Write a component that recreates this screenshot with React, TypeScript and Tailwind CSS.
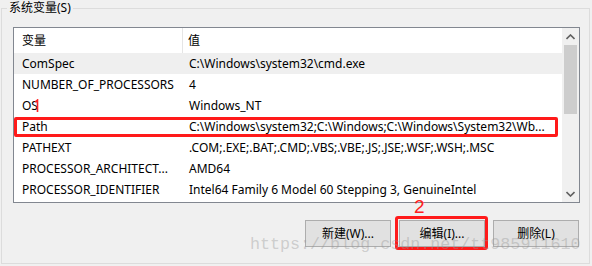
const rows: [string, string][] = [
  ['ComSpec', 'C:\\Windows\\system32\\cmd.exe'],
  ['NUMBER_OF_PROCESSORS', '4'],
  ['OS', 'Windows_NT'],
  ['Path', 'C:\\Windows\\system32;C:\\Windows;C:\\Windows\\System32\\Wb...'],
  ['PATHEXT', '.COM;.EXE;.BAT;.CMD;.VBS;.VBE;.JS;.JSE;.WSF;.WSH;.MSC'],
  ['PROCESSOR_ARCHITECT...', 'AMD64'],
  ['PROCESSOR_IDENTIFIER', 'Intel64 Family 6 Model 60 Stepping 3, GenuineIntel'],
];

const font = { fontFamily: '"Noto Sans", "Noto Sans CJK SC", sans-serif' };

// small filled chevron used by the scrollbar arrows
const Chevron = ({ down = false }: { down?: boolean }) => (
  <svg width="9" height="6" viewBox="0 0 9 6" className={down ? 'rotate-180' : ''}>
    <path d="M0.5 5 L4.5 1 L8.5 5" fill="none" stroke="#606060" strokeWidth="1.6" />
  </svg>
);

export default function App() {
  return (
    <div
      className="relative w-[592px] h-[266px] overflow-hidden bg-[#f0f0f0] pt-[8px] pl-[1px] text-[12px] text-black"
      style={font}
    >
      {/* group box */}
      <div className="relative w-[589px] h-[256px] border border-[#dcdcdc] pl-[11px] pt-[18px]">
        <span className="absolute left-[5px] -top-[9px] px-[2px] bg-[#f0f0f0] leading-[16px]">
          系统变量(S)
        </span>

        {/* list view */}
        <div className="flex w-[567px] h-[176px] border border-[#828790] bg-white">
          <div className="flex-1 flex flex-col">
            <div className="flex h-[25px] items-center">
              <div className="w-[169px] h-full pl-[8px] flex items-center border-r border-[#e5e5e5]">变量</div>
              <div className="pl-[5px]">值</div>
            </div>
            {rows.map(([name, value], i) => (
              <div
                key={name}
                className={`relative flex h-[21px] items-center whitespace-nowrap ${i === 0 ? 'bg-[#efefef]' : ''}`}
              >
                <div className="w-[170px] pl-[8px]">{name}</div>
                <div className="pl-[5px]">{value}</div>
                {name === 'Path' && (
                  <div className="absolute left-0 right-[4px] top-[1px] bottom-[0px] border-[3px] border-[#ff1a1a] rounded-[2px]" />
                )}
                {name === 'OS' && (
                  <svg className="absolute left-[20px] top-[4px]" width="6" height="14" viewBox="0 0 6 14">
                    <path d="M1 3 L3.5 1 L3.5 13" fill="none" stroke="#ff2020" strokeWidth="1.6" />
                  </svg>
                )}
              </div>
            ))}
          </div>

          {/* scrollbar */}
          <div className="w-[17px] flex flex-col items-center bg-[#f0f0f0]">
            <div className="h-[17px] flex items-center justify-center">
              <Chevron />
            </div>
            <div className="w-[13px] h-[69px] bg-[#cdcdcd]" />
            <div className="flex-1" />
            <div className="h-[17px] flex items-center justify-center">
              <Chevron down />
            </div>
          </div>
        </div>

        {/* buttons */}
        <div className="flex justify-end gap-[8px] w-[566px] mt-[17px]">
          <button className="w-[86px] h-[27px] border border-[#adadad] bg-[#e1e1e1]">新建(W)...</button>
          <div className="relative">
            <button className="w-[86px] h-[27px] border border-[#adadad] bg-[#e1e1e1]">编辑(I)...</button>
            <div className="absolute -left-[4px] -right-[3px] -top-[4px] -bottom-[3px] border-[3px] border-[#ff1a1a] rounded-[3px]" />
            <span
              className="absolute left-[15px] -top-[23px] text-[19px] leading-[20px] text-[#ff2020]"
              style={{ fontFamily: '"Liberation Sans", sans-serif' }}
            >
              2
            </span>
          </div>
          <button className="w-[86px] h-[27px] border border-[#adadad] bg-[#e1e1e1]">删除(L)</button>
        </div>
      </div>

      {/* watermark */}
      <div
        className="absolute left-[250px] top-[235px] text-[16.7px] leading-[20px] text-[rgba(150,150,150,0.4)] pointer-events-none"
        style={{ fontFamily: '"Liberation Mono", monospace' }}
      >
        https://blog.csdn.net/tt985911610
      </div>
    </div>
  );
}
